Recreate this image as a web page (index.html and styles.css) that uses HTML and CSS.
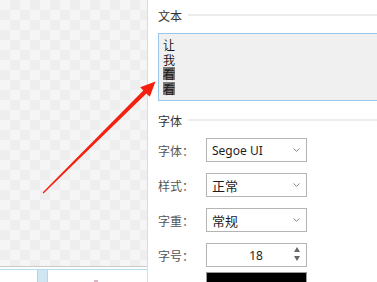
FILE: index.html
```html
<!DOCTYPE html>
<html lang="zh-CN">
<head>
    <meta charset="UTF-8">
    <meta name="viewport" content="width=device-width, initial-scale=1.0">
    <title>文本属性</title>
    <link rel="stylesheet" href="styles.css">
</head>
<body>
    <div class="canvas">
        <div class="checker"></div>
        <div class="tabs">
            <span class="tab"></span>
            <span class="dot"></span>
        </div>
    </div>

    <div class="panel">
        <div class="section-title">
            <span>文本</span>
            <i class="rule"></i>
        </div>
        <div class="text-box">
            <div class="line">让</div>
            <div class="line">我</div>
            <div class="line"><span class="sel">看</span></div>
            <div class="line"><span class="sel">看</span></div>
        </div>

        <div class="section-title second">
            <span>字体</span>
            <i class="rule"></i>
        </div>
        <div class="form">
            <label>字体：</label>
            <div class="select latin">Segoe UI<svg class="chev" viewBox="0 0 7 4"><path d="M0.5 0.5 L3.5 3.3 L6.5 0.5"/></svg></div>

            <label>样式：</label>
            <div class="select">正常<svg class="chev" viewBox="0 0 7 4"><path d="M0.5 0.5 L3.5 3.3 L6.5 0.5"/></svg></div>

            <label>字重：</label>
            <div class="select">常规<svg class="chev" viewBox="0 0 7 4"><path d="M0.5 0.5 L3.5 3.3 L6.5 0.5"/></svg></div>

            <label>字号：</label>
            <div class="spin">
                <span class="num">18</span>
                <span class="arrows">
                    <svg viewBox="0 0 6 5"><path d="M3 0 L6 5 L0 5 Z"/></svg>
                    <svg viewBox="0 0 6 5"><path d="M0 0 L6 0 L3 5 Z"/></svg>
                </span>
            </div>

            <label class="last">颜色：</label>
            <div class="color last"></div>
        </div>
    </div>

    <!-- 指示箭头 -->
    <svg class="arrow" width="377" height="282" viewBox="0 0 377 282">
        <polygon points="42.6,192.6 143.3,90.6 140.2,87.2 155.5,81.5 149.8,96.8 146.4,93.6 43.5,193.5"/>
    </svg>
</body>
</html>
```

FILE: styles.css
```css
body {
    margin: 0;
    width: 377px;
    height: 282px;
    overflow: hidden;
    display: flex;
    background: #fff;
    font-family: "Noto Sans CJK SC", "Noto Sans", sans-serif;
    font-size: 12px;
    color: #333;
    position: relative;
}
.canvas {
    width: 147px;
    flex: none;
    border-right: 1px solid #dcdcdc;
    display: flex;
    flex-direction: column;
}
.checker {
    height: 268px;
    background-color: #f5f5f5;
    background-image: conic-gradient(#eeeeee 25%, transparent 0 50%, #eeeeee 0 75%, transparent 0);
    background-size: 20px 20px;
    border-bottom: 1px solid #cacaca;
}
.tabs {
    flex: 1;
    margin-top: 2px;
    border-top: 1px solid #b5dcef;
    position: relative;
}
.tab {
    display: block;
    margin-left: 37px;
    width: 9px;
    height: 12px;
    background: #cfe6f3;
    border-left: 1px solid #b0d6ea;
    border-right: 1px solid #b0d6ea;
}
.dot {
    position: absolute;
    left: 94px;
    bottom: 0;
    width: 4px;
    height: 2px;
    background: #d8b8c8;
}
.panel {
    flex: 1;
    padding-left: 10px;
    overflow: hidden;
}
.section-title {
    display: flex;
    align-items: center;
    height: 20px;
    margin-top: 5px;
    color: #333;
    font-size: 12px;
}
.section-title.second {
    margin-top: 9px;
}
.rule {
    flex: 1;
    height: 2px;
    margin-left: 6px;
    background: #ececec;
}
.text-box {
    margin-top: 8px;
    width: 240px;
    height: 60px;
    border: 1px solid #9cc5ec;
    background: #f0f0f0;
    padding: 4px 4px 2px;
    color: #1a1a1a;
}
.line {
    height: 14.6px;
    font-size: 12px;
    line-height: 13px;
}
.sel {
    display: inline-block;
    height: 13px;
    line-height: 13px;
    background: #7c7c7c;
    color: #1a1a1a;
}
.form {
    margin-top: 8px;
    display: grid;
    grid-template-columns: 48px 101px;
    grid-auto-rows: 24px;
    row-gap: 11px;
    align-items: center;
}
.form label {
    color: #555;
    font-size: 12px;
}
.select,
.spin,
.color {
    box-sizing: border-box;
    height: 24px;
    border: 1px solid #b4b4b4;
    background: #fff;
    display: flex;
    align-items: center;
    padding: 0 6px 0 5px;
    color: #1e1e1e;
    font-size: 13px;
}
.select.latin {
    font-family: "Noto Sans", sans-serif;
    font-size: 12px;
}
.chev {
    margin-left: auto;
    width: 7px;
    height: 4px;
    fill: none;
    stroke: #888;
    stroke-width: 1;
}
.spin {
    justify-content: center;
    position: relative;
    font-family: "Noto Sans", sans-serif;
    font-size: 12px;
}
.arrows {
    position: absolute;
    right: 6px;
    top: 3px;
    display: flex;
    flex-direction: column;
    gap: 4px;
}
.arrows svg {
    width: 6px;
    height: 5px;
    fill: #666;
}
.form .last {
    margin-top: -6px;
}
.form label.last {
    margin-top: -2px;
    align-self: start;
    line-height: 14px;
    padding-top: 6px;
}
.color {
    background: #000;
    border-color: #999;
    height: 30px;
    align-self: start;
}
.arrow {
    position: absolute;
    left: 0;
    top: 0;
    pointer-events: none;
}
.arrow polygon {
    fill: #f31f0f;
}
```
